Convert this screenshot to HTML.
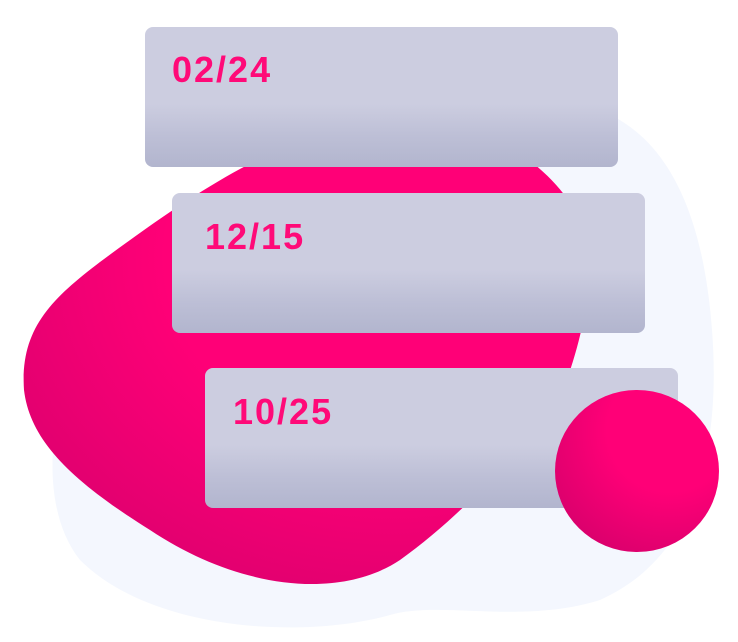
<!DOCTYPE html>
<html><head><meta charset="utf-8"><style>
html,body{margin:0;padding:0;background:#fff;}
body{width:738px;height:642px;position:relative;overflow:hidden;font-family:"Liberation Sans",sans-serif;}
svg{position:absolute;left:0;top:0;}
.card{position:absolute;width:473px;height:140px;border-radius:8px;background:linear-gradient(180deg,#cccde0 0%,#cccde0 55%,#bdbfd6 78%,#b2b5ce 100%);}
.card span{position:absolute;color:#ff0a78;font-size:36px;line-height:1;font-weight:bold;letter-spacing:2px;}
</style></head><body>
<svg width="738" height="642" viewBox="0 0 738 642">
<defs>
<radialGradient id="pg" cx="0.65" cy="0.3" r="0.8"><stop offset="0.5" stop-color="#ff0077"/><stop offset="1" stop-color="#dd006e"/></radialGradient>
<radialGradient id="cg" cx="0.7" cy="0.25" r="0.85"><stop offset="0.45" stop-color="#ff0077"/><stop offset="1" stop-color="#d9006c"/></radialGradient>
</defs>
<path d="M560 100 C640 110 700 170 712 330 C722 460 690 560 600 600 C520 625 440 600 390 615 C300 640 150 630 80 560 C40 510 50 420 70 380 L300 130 Z" fill="#f4f7fe"/>
<path d="M380 117 C470 117 540 150 578 215 C600 260 585 330 565 385 C540 430 470 510 400 560 C340 600 240 590 150 530 C70 480 30 440 24 390 C20 330 50 300 100 262 C170 210 230 170 280 150 C320 130 350 117 380 117 Z" fill="url(#pg)"/>
</svg>
<div class="card" style="left:145px;top:27px"><span style="left:27px;top:25px">02/24</span></div>
<div class="card" style="left:172px;top:193px"><span style="left:33px;top:26px">12/15</span></div>
<div class="card" style="left:205px;top:368px"><span style="left:28px;top:26px">10/25</span></div>
<svg width="738" height="642" viewBox="0 0 738 642"><ellipse cx="637" cy="471" rx="82" ry="81" fill="url(#cg)"/></svg>
</body></html>
